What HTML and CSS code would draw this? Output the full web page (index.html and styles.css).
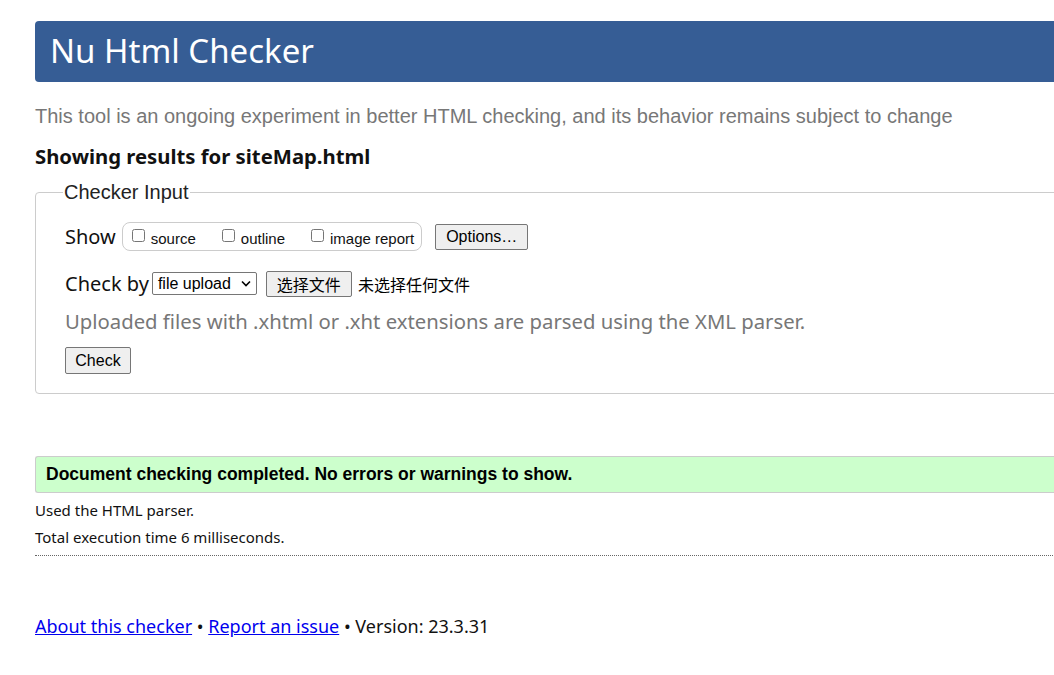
FILE: index.html
```html
<!DOCTYPE html>
<html lang="en">
<head>
<meta charset="utf-8">
<title>Showing results for siteMap.html - Nu Html Checker</title>
<link rel="stylesheet" href="styles.css">
</head>
<body>
<div class="page">
  <h1 class="title">Nu Html Checker</h1>
  <p class="intro">This tool is an ongoing experiment in better HTML checking, and its behavior remains subject to change</p>
  <h2 class="showing">Showing results for siteMap.html</h2>
  <fieldset class="input">
    <legend class="legend">Checker Input</legend>
    <div class="row show-row">
      <span class="label">Show</span>
      <span class="opts">
        <label class="opt"><input type="checkbox" class="cb"> source</label>
        <label class="opt"><input type="checkbox" class="cb"> outline</label>
        <label class="opt"><input type="checkbox" class="cb"> image report</label>
      </span>
      <button class="btn opts-btn">Options…</button>
    </div>
    <div class="row by-row">
      <span class="label">Check by</span>
      <span class="select">file upload <svg class="chev" width="10" height="7" viewBox="0 0 10 7"><path d="M1 1.5 L5 5.5 L9 1.5" fill="none" stroke="#000" stroke-width="1.6"/></svg></span>
      <button class="btn file-btn">选择文件</button>
      <span class="nofile">未选择任何文件</span>
    </div>
    <p class="hint">Uploaded files with .xhtml or .xht extensions are parsed using the XML parser.</p>
    <button class="btn check-btn">Check</button>
  </fieldset>
  <div class="success">Document checking completed. No errors or warnings to show.</div>
  <p class="meta">Used the HTML parser.</p>
  <p class="meta">Total execution time 6 milliseconds.</p>
  <hr class="sep">
  <p class="footer"><a href="#">About this checker</a> • <a href="#">Report an issue</a> • Version: 23.3.31</p>
</div>
</body>
</html>
```
FILE: styles.css
```css
html { overflow: hidden; }
body {
  margin: 0;
  background: #fff;
  color: #111;
  font-family: "Noto Sans", "Open Sans", sans-serif;
}
.page {
  width: 1100px;
  padding: 21px 0 0 35px;
}
.title {
  margin: 0;
  height: 61px;
  box-sizing: border-box;
  padding: 8px 0 0 15px;
  background: #365d95;
  color: #fff;
  border-radius: 4px 0 0 4px;
  font-weight: 400;
  font-size: 33px;
  line-height: 44px;
}
.intro {
  margin: 23px 0 0;
  color: #777;
  font-family: "Liberation Sans", Arial, sans-serif;
  font-size: 20px;
  line-height: 22px;
}
.showing {
  margin: 16px 0 0;
  font-size: 20.3px;
  line-height: 26px;
  font-weight: 700;
  color: #111;
}
.input {
  margin: 12px 0 0;
  padding: 18px 0 19px 29px;
  border: 1px solid #ccc;
  border-radius: 4px;
}
.legend {
  padding: 0 1px;
  margin-left: -2px;
  font-family: "Liberation Sans", Arial, sans-serif;
  font-size: 20px;
  color: #222;
}
.row {
  display: flex;
  align-items: center;
}
.label {
  font-size: 20px;
  color: #111;
}
.opts {
  display: inline-flex;
  align-items: center;
  margin-left: 6px;
  height: 27px;
  padding: 0 7px 0 9px;
  border: 1px solid #ccc;
  border-radius: 8px;
  font-family: "Liberation Sans", Arial, sans-serif;
  font-size: 15px;
}
.opt {
  display: inline-flex;
  align-items: center;
  margin-right: 26px;
  padding-top: 3px;
}
.opt:last-child { margin-right: 0; }
.cb {
  margin: 0 6px 0 0;
  width: 13px;
  height: 13px;
  position: relative;
  top: -3px;
}
.btn {
  font-family: "Liberation Sans", Arial, sans-serif;
  background: #efefef;
  border: 1px solid #767676;
  border-radius: 2px;
  color: #000;
  padding: 0 8px;
}
.opts-btn {
  margin-left: 13px;
  height: 26px;
  font-size: 16px;
  width: 93px;
}
.by-row { margin-top: 19px; }
.select {
  display: inline-flex;
  align-items: center;
  justify-content: space-between;
  margin-left: 3px;
  height: 23px;
  box-sizing: border-box;
  padding: 0 5px;
  border: 1px solid #767676;
  border-radius: 2px;
  font-family: "Liberation Sans", Arial, sans-serif;
  font-size: 16px;
  color: #000;
  width: 105px;
}
.file-btn {
  margin-left: 9px;
  height: 26px;
  font-family: "Noto Sans CJK SC", sans-serif;
  font-size: 16px;
  width: 86px;
  padding: 0;
}
.nofile {
  margin-left: 6px;
  font-family: "Noto Sans CJK SC", sans-serif;
  font-size: 16px;
  color: #000;
}
.hint {
  margin: 11px 0 0;
  color: #777;
  font-size: 20.3px;
  line-height: 27px;
}
.check-btn {
  margin-top: 12px;
  height: 27px;
  width: 66px;
  font-size: 16px;
  padding: 0;
}
.success {
  margin-top: 62px;
  height: 37px;
  box-sizing: border-box;
  padding: 7px 0 0 10px;
  background: #ccffcc;
  border: 1px solid #ccc;
  border-right: none;
  border-radius: 3px 0 0 3px;
  font-family: "Liberation Sans", Arial, sans-serif;
  font-weight: 700;
  font-size: 17.5px;
  color: #000;
}
.meta {
  margin: 8px 0 0;
  font-size: 15px;
  line-height: 19px;
  color: #111;
}
.meta + .meta { margin-top: 8px; }
.sep {
  margin: 8px 0 0;
  border: 0;
  border-top: 1px dotted #666;
  height: 0;
}
.footer {
  margin: 58px 0 0;
  font-size: 18px;
  color: #111;
}
.footer a { color: #0000ee; }
```
